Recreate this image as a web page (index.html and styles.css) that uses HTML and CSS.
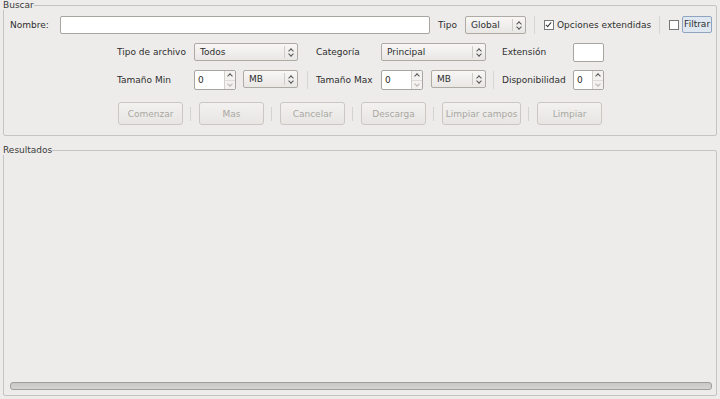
FILE: index.html
```html
<!DOCTYPE html>
<html lang="es">
<head>
    <meta charset="UTF-8">
    <title>Buscar</title>
    <link rel="stylesheet" href="styles.css">
</head>
<body>
    <fieldset class="group search">
        <legend>Buscar</legend>

        <div class="row-name">
            <span class="lbl">Nombre:</span>
            <div class="field name-field"></div>
            <span class="lbl tipo">Tipo</span>
            <div class="combo global"><span>Global</span><i class="arrows"></i></div>
            <span class="vsep"></span>
            <span class="check on"></span>
            <span class="lbl">Opciones extendidas</span>
            <span class="vsep"></span>
            <span class="check"></span>
            <span class="filter-btn">Filtrar</span>
        </div>

        <div class="options">
            <span class="lbl">Tipo de archivo</span>
            <div class="combo"><span>Todos</span><i class="arrows"></i></div>
            <span></span>
            <span class="lbl">Categoría</span>
            <div class="combo"><span>Principal</span><i class="arrows"></i></div>
            <span></span>
            <span class="lbl">Extensión</span>
            <div class="field ext"></div>

            <span class="lbl">Tamaño Min</span>
            <div class="pair">
                <div class="spin"><span>0</span><i class="spin-btns"><b class="up"></b><b class="down"></b></i></div>
                <div class="combo unit"><span>MB</span><i class="arrows"></i></div>
            </div>
            <span class="vsep center"></span>
            <span class="lbl">Tamaño Max</span>
            <div class="pair">
                <div class="spin"><span>0</span><i class="spin-btns"><b class="up"></b><b class="down"></b></i></div>
                <div class="combo unit"><span>MB</span><i class="arrows"></i></div>
            </div>
            <span class="vsep left"></span>
            <span class="lbl">Disponibilidad</span>
            <div class="spin small"><span>0</span><i class="spin-btns"><b class="up"></b><b class="down"></b></i></div>
        </div>

        <div class="actions">
            <button disabled>Comenzar</button>
            <span class="vsep"></span>
            <button disabled>Mas</button>
            <span class="vsep"></span>
            <button disabled>Cancelar</button>
            <span class="vsep"></span>
            <button disabled>Descarga</button>
            <span class="vsep"></span>
            <button disabled class="wide">Limpiar campos</button>
            <span class="vsep"></span>
            <button disabled>Limpiar</button>
        </div>
    </fieldset>

    <fieldset class="group results">
        <legend>Resultados</legend>
        <div class="results-body"></div>
        <div class="hscroll"></div>
    </fieldset>
</body>
</html>
```

FILE: styles.css
```css
body {
    margin: 0;
    width: 720px;
    height: 399px;
    background: #edeceb;
    font-family: 'DejaVu Sans', sans-serif;
    font-size: 9px;
    color: #2e2e2e;
    overflow: hidden;
}

.group {
    margin: 0 3px;
    padding: 0;
    border: 1px solid #c6c4c0;
    border-radius: 2px;
    min-width: 0;
}

.group legend {
    padding: 0;
    margin-left: -1px;
    line-height: 10px;
    color: #3a3a3a;
}

.search {
    height: 134px;
    margin-top: 0;
}

.results {
    margin-top: 9px;
    height: 249px;
    display: flex;
    flex-direction: column;
}

.lbl {
    white-space: nowrap;
}

/* first row */
.row-name {
    display: flex;
    align-items: center;
    height: 18px;
    margin-top: 6px;
    padding-left: 6px;
}

.row-name .lbl:first-child {
    width: 50px;
}

.field {
    background: #fff;
    border: 1px solid #a8a5a0;
    border-radius: 2px;
    box-sizing: border-box;
    height: 18px;
}

.name-field {
    width: 370px;
}

.tipo {
    margin: 0 8px 0 8px;
}

.combo {
    display: flex;
    align-items: center;
    box-sizing: border-box;
    height: 18px;
    border: 1px solid #aeaaa4;
    border-radius: 2px;
    background: linear-gradient(#f8f7f6, #e9e7e4);
    padding-left: 5px;
}

.combo span {
    flex: 1;
}

.combo .arrows {
    width: 12px;
    height: 12px;
    border-left: 1px solid #cfccc7;
    position: relative;
}

.combo .arrows::before,
.combo .arrows::after {
    content: '';
    position: absolute;
    left: 4px;
    width: 3px;
    height: 3px;
    border-left: 1px solid #555;
    border-top: 1px solid #555;
}

.combo .arrows::before {
    top: 3px;
    transform: rotate(45deg);
}

.combo .arrows::after {
    top: 6px;
    transform: rotate(225deg);
}

.global {
    width: 61px;
}

.vsep {
    width: 1px;
    height: 18px;
    background: #d8d6d2;
    margin: 0 10px 0 8px;
}

.row-name .vsep {
    margin: 0 9px 0 8px;
}

.check {
    width: 8px;
    height: 8px;
    border: 1px solid #777;
    background: #fff;
    margin-right: 3px;
    position: relative;
}

.check.on::after {
    content: '';
    position: absolute;
    left: 2px;
    top: 0;
    width: 2px;
    height: 5px;
    border-right: 1px solid #333;
    border-bottom: 1px solid #333;
    transform: rotate(40deg);
}

.filter-btn {
    border: 1px solid #90a4bf;
    border-radius: 2px;
    background: #dfe7f1;
    height: 15px;
    line-height: 15px;
    padding: 0 1px;
    margin-top: -2px;
}

/* option grid */
.options {
    display: grid;
    grid-template-columns: 77px 104px 18px 65px 105px 16px 71px 31px;
    grid-auto-rows: 18px;
    row-gap: 10px;
    align-items: center;
    margin: 9px 0 0 113px;
}

.ext {
    width: 31px;
    height: 19px;
}

.pair {
    display: flex;
    justify-content: space-between;
}

.unit {
    width: 55px;
}

.spin {
    display: flex;
    box-sizing: border-box;
    width: 42px;
    height: 20px;
    background: #fff;
    border: 1px solid #a8a5a0;
    border-radius: 2px;
    padding-left: 3px;
    align-items: center;
}

.spin.small {
    width: 31px;
}

.spin span {
    flex: 1;
}

.spin-btns {
    display: flex;
    flex-direction: column;
    width: 10px;
    height: 18px;
    border-left: 1px solid #d3d0cb;
    background: #f3f2f0;
}

.spin-btns b {
    flex: 1;
    position: relative;
}

.spin-btns b::after {
    content: '';
    position: absolute;
    left: 3px;
    width: 3px;
    height: 3px;
    border-left: 1px solid #555;
    border-top: 1px solid #555;
}

.spin-btns .up::after {
    top: 3px;
    transform: rotate(45deg);
}

.spin-btns .down {
    border-top: 1px solid #dedbd6;
}

.spin-btns .down::after {
    top: 1px;
    border-color: #b8b5b0;
    transform: rotate(225deg);
}

.vsep.center {
    margin: 0 auto;
}

.vsep.left {
    margin: 0 0 0 7px;
}

/* buttons */
.actions {
    display: flex;
    align-items: center;
    margin: 13px 0 0 114px;
}

.actions button {
    width: 65px;
    height: 23px;
    font: inherit;
    color: #a9a7a3;
    background: linear-gradient(#f2f1ef, #e8e6e3);
    border: 1px solid #cbc8c3;
    border-radius: 3px;
    padding: 0;
}

.actions button.wide {
    width: 79px;
}

.actions .vsep {
    margin: 0 8px 0 7px;
    height: 14px;
    background: #d5d3cf;
}

/* results */
.results-body {
    flex: 1;
}

.hscroll {
    margin: 0 4px 5px 6px;
    height: 6px;
    border: 1px solid #a09e9a;
    border-radius: 3px;
    background: linear-gradient(#c9c7c4, #d6d4d1);
}
```
